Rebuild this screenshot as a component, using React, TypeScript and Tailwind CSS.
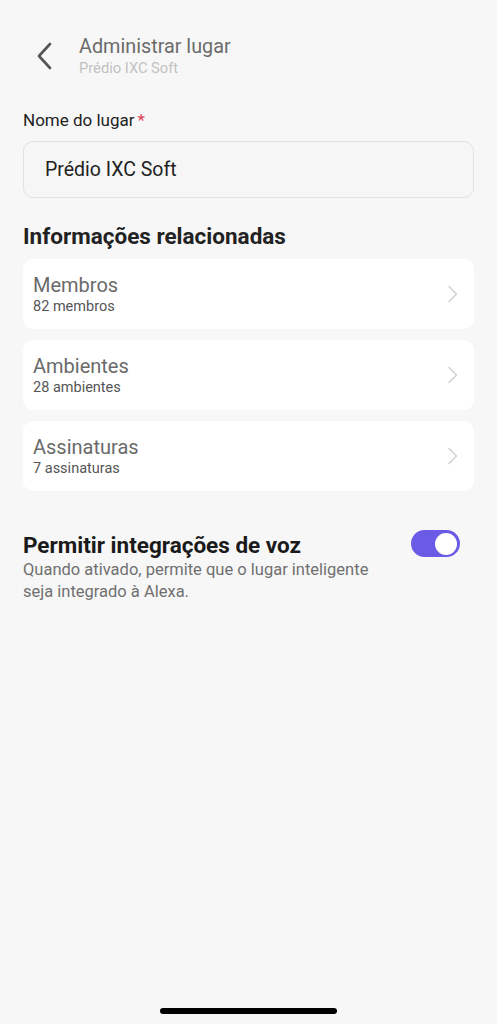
import React from "react";

const items = [
  { title: "Membros", sub: "82 membros" },
  { title: "Ambientes", sub: "28 ambientes" },
  { title: "Assinaturas", sub: "7 assinaturas" },
];

function Chevron() {
  return (
    <svg width="12" height="18" viewBox="0 0 12 18" fill="none">
      <path d="M2 1.5L9.5 9L2 16.5" stroke="#d2d2d2" strokeWidth="1.6" strokeLinecap="round" strokeLinejoin="round" />
    </svg>
  );
}

export default function App() {
  return (
    <div className="flex flex-col w-[497px] h-[1024px] bg-[#f7f7f7] font-['Roboto',sans-serif] overflow-hidden">
      <div className="flex items-center h-[48px] mt-[32px] pl-[34px]">
        <svg width="20" height="28" viewBox="0 0 20 28" fill="none">
          <path d="M16 2L5 14L16 26" stroke="#555555" strokeWidth="2.6" strokeLinecap="round" strokeLinejoin="round" />
        </svg>
        <div className="flex flex-col ml-[25px]">
          <span className="text-[19.8px] leading-[24px] text-[#6b6b6b]">Administrar lugar</span>
          <span className="text-[14.7px] leading-[18px] text-[#c2c2c2]">Prédio IXC Soft</span>
        </div>
      </div>

      <div className="flex flex-col px-[23px]">
        <div className="mt-[29px] text-[17px] leading-[22px] text-[#222]">
          Nome do lugar<span className="text-[#e0405a] ml-[3px]">*</span>
        </div>
        <div className="flex items-center h-[57px] mt-[10px] px-[21px] rounded-[10px] border border-[#e2e2e2] bg-[#f6f6f6] text-[19.5px] text-[#222]">
          Prédio IXC Soft
        </div>

        <div className="mt-[24px] text-[22.5px] leading-[28px] font-bold text-[#222]">
          Informações relacionadas
        </div>

        <div className="flex flex-col gap-[11px] mt-[9px]">
          {items.map((it) => (
            <div key={it.title} className="flex items-center justify-between h-[70px] rounded-[10px] bg-white pl-[10px] pr-[15px]">
              <div className="flex flex-col">
                <span className="text-[20px] leading-[25px] text-[#6a6a6a]">{it.title}</span>
                <span className="text-[14.5px] leading-[18px] text-[#555]">{it.sub}</span>
              </div>
              <Chevron />
            </div>
          ))}
        </div>

        <div className="flex justify-between mt-[40px]">
          <div className="flex flex-col">
            <span className="text-[22.5px] leading-[28px] font-bold text-[#1a1a1a]">Permitir integrações de voz</span>
            <span className="text-[16.5px] leading-[22px] text-[#707070] w-[362px]">
              Quando ativado, permite que o lugar inteligente seja integrado à Alexa.
            </span>
          </div>
          <div className="flex items-center justify-end w-[49px] h-[27px] -mt-[1px] mr-[14px] rounded-full bg-[#6a5ae6] px-[3px]">
            <div className="w-[22px] h-[22px] rounded-full bg-white" />
          </div>
        </div>
      </div>

      <div className="flex-1" />
      <div className="flex justify-center pb-[10px]">
        <div className="w-[177px] h-[6px] rounded-full bg-black" />
      </div>
    </div>
  );
}
